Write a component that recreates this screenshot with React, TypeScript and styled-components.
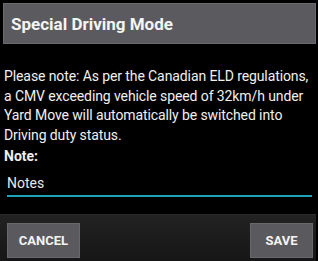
import React from 'react';
import styled, {createGlobalStyle} from 'styled-components';

const GlobalStyle = createGlobalStyle`
  html, body {
    margin: 0;
    padding: 0;
    background: #000000;
  }
  body {
    font-family: Roboto, "Liberation Sans", Arial, sans-serif;
    color: #f2f2f2;
  }
`;

const Dialog = styled.div`
  width: 316px;
  height: 261px;
  display: flex;
  flex-direction: column;
  background: #000000;
`;

const Header = styled.div`
  margin: 3px 0 0 3px;
  height: 41px;
  box-sizing: border-box;
  background: #5b5b5f;
  border: 1px solid #6a6a6e;
  display: flex;
  align-items: center;
  padding-left: 7px;
  font-size: 17px;
  font-weight: 700;
  color: #f4f4f4;
`;

const Body = styled.div`
  flex: 1;
  display: flex;
  flex-direction: column;
  padding: 23px 2px 0 4px;
`;

const Message = styled.p`
  margin: 0;
  font-size: 14px;
  line-height: 19.5px;
  letter-spacing: -0.1px;
  color: #f0f0f0;
`;

const Label = styled.div`
  margin-top: 2px;
  font-size: 14px;
  font-weight: 700;
  line-height: 18px;
  color: #eeeeee;
`;

const NoteInput = styled.div`
  margin: 9px 2px 0 3px;
  padding: 0 0 2px 0;
  font-size: 14px;
  line-height: 19px;
  color: #e8e8e8;
  border-bottom: 2px solid #1ca3b4;
`;

const Footer = styled.div`
  height: 47px;
  box-sizing: border-box;
  background: linear-gradient(#222222, #161616);
  border-top: 1px solid #2a2a2a;
  display: flex;
  justify-content: space-between;
  align-items: flex-start;
  padding: 8px 3px 0 7px;
`;

const Button = styled.button<{$w: number}>`
  width: ${p => p.$w}px;
  height: 35px;
  background: #5a5a5e;
  border: 1px solid #68686c;
  color: #f4f4f4;
  font-family: Roboto, "Liberation Sans", Arial, sans-serif;
  font-size: 13px;
  font-weight: 700;
  padding: 0;
`;

export default function App() {
  return (
    <Dialog>
      <GlobalStyle />
      <Header>Special Driving Mode</Header>
      <Body>
        <Message>
          Please note: As per the Canadian ELD regulations, a CMV exceeding vehicle speed of
          32km/h under Yard Move will automatically be switched into Driving duty status.
        </Message>
        <Label>Note:</Label>
        <NoteInput>Notes</NoteInput>
      </Body>
      <Footer>
        <Button $w={73}>CANCEL</Button>
        <Button $w={63}>SAVE</Button>
      </Footer>
    </Dialog>
  );
}
